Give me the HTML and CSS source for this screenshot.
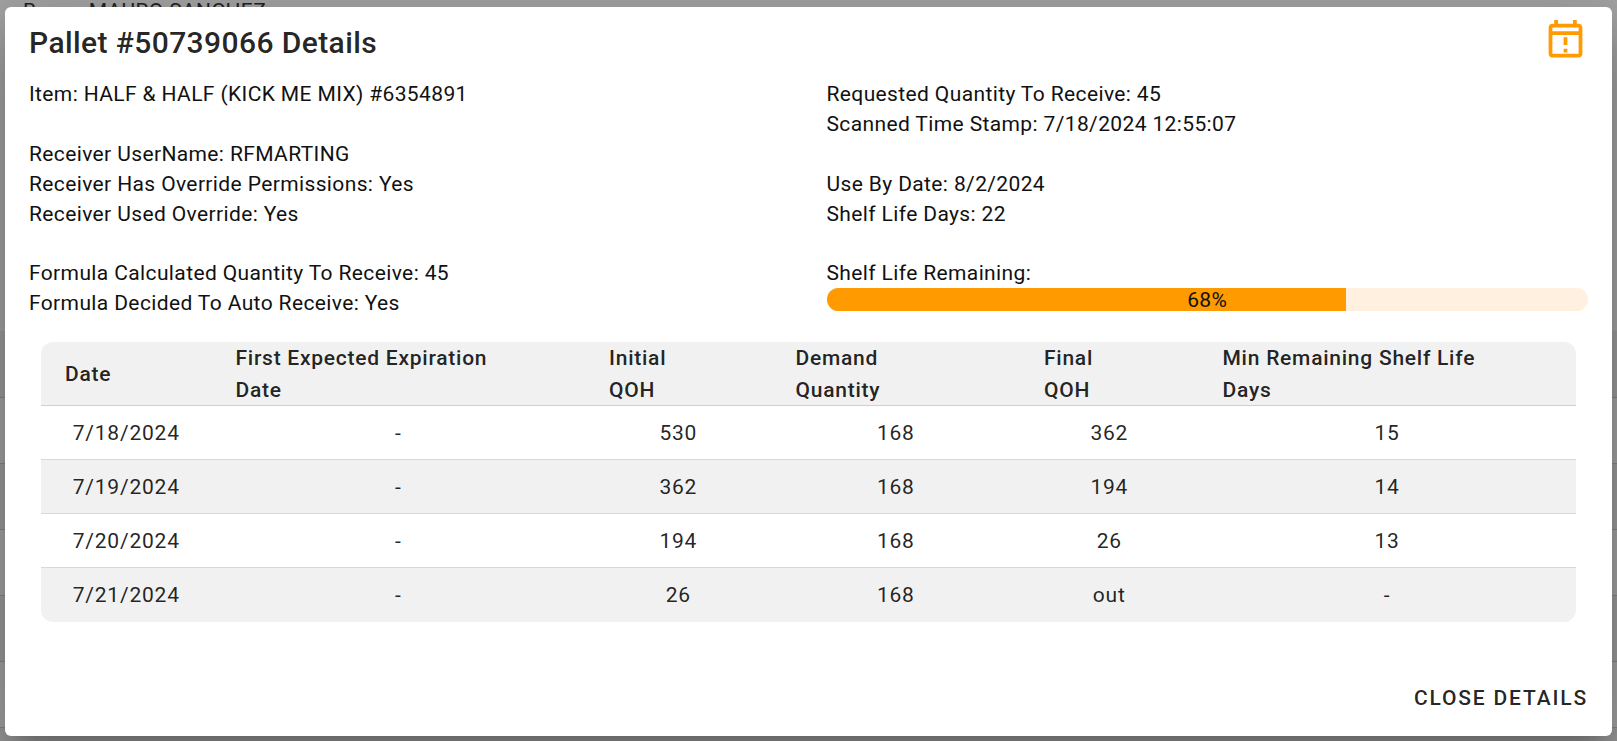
FILE: index.html
```html
<!DOCTYPE html>
<html lang="en">
<head>
<meta charset="utf-8">
<title>Pallet Details</title>
<link rel="stylesheet" href="styles.css">
</head>
<body>
<div class="page">
  <p class="page-line"><span>Buyer:</span> <span>MAURO SANCHEZ</span></p>
  <div class="page-rows"><i></i><i></i><i></i><i></i><i></i><i></i><i></i></div>
</div>
<main class="dialog">
  <header class="head">
    <h1 class="title">Pallet #50739066 Details</h1>
    <svg class="alert" viewBox="0 0 24 24"><path d="M19 3H18V1H16V3H8V1H6V3H5C3.89 3 3 3.9 3 5V19C3 20.11 3.9 21 5 21H19C20.11 21 21 20.11 21 19V5C21 3.9 20.11 3 19 3M19 19H5V9H19V19M19 7H5V5H19V7M11 10.2H13V14.4H11ZM11 16.4H13V18.4H11Z"/></svg>
  </header>
  <section class="info">
    <div class="col">
      <p class="group">Item: HALF &amp; HALF (KICK ME MIX) #6354891</p>
      <p>Receiver UserName: RFMARTING</p>
      <p>Receiver Has Override Permissions: Yes</p>
      <p>Receiver Used Override: Yes</p>
      <p class="last-group">Formula Calculated Quantity To Receive: 45</p>
      <p>Formula Decided To Auto Receive: Yes</p>
    </div>
    <div class="col">
      <p>Requested Quantity To Receive: 45</p>
      <p class="group">Scanned Time Stamp: 7/18/2024 12:55:07</p>
      <p>Use By Date: 8/2/2024</p>
      <p>Shelf Life Days: 22</p>
      <p class="last-group">Shelf Life Remaining:</p>
      <div class="bar"><div class="fill" style="width:68.18%"></div><span class="pct">68%</span></div>
    </div>
  </section>
  <table class="grid">
    <colgroup><col class="c1"><col class="c2"><col class="c3"><col class="c4"><col class="c5"><col class="c6"></colgroup>
    <thead><tr><th>Date</th><th>First Expected Expiration<br>Date</th><th>Initial<br>QOH</th><th>Demand<br>Quantity</th><th>Final<br>QOH</th><th>Min Remaining Shelf Life<br>Days</th></tr></thead>
    <tbody>
      <tr><td>7/18/2024</td><td>-</td><td>530</td><td>168</td><td>362</td><td>15</td></tr>
      <tr><td>7/19/2024</td><td>-</td><td>362</td><td>168</td><td>194</td><td>14</td></tr>
      <tr><td>7/20/2024</td><td>-</td><td>194</td><td>168</td><td>26</td><td>13</td></tr>
      <tr><td>7/21/2024</td><td>-</td><td>26</td><td>168</td><td>out</td><td>-</td></tr>
    </tbody>
  </table>
  <footer class="foot"><button class="close">CLOSE DETAILS</button></footer>
</main>
</body>
</html>
```
FILE: styles.css
```css
* { box-sizing: border-box; }
body { margin: 0; width: 1617px; height: 741px; overflow: hidden; background: #a3a3a3; font-family: Roboto, sans-serif; }
p, h1 { margin: 0; }
.page { position: absolute; inset: 0; overflow: hidden; }
.page-line { padding-left: 23px; font-size: 21px; line-height: 24px; margin-top: -1px; letter-spacing: .375px; color: #222; white-space: nowrap; }
.page-rows { margin-top: 308px; }
.page-rows i { display: block; height: 66px; border-top: 1px solid #868686; }
.page-rows i:first-child { border-top: 0; }
.page-rows i:nth-child(odd) { background: #9b9b9b; }
.dialog { position: relative; display: flex; flex-direction: column; width: 1607px; height: 729px; margin: 7px 5px; background: #fff; border-radius: 6px; padding: 0 24px; box-shadow: 0 16px 22px -10px rgba(0,0,0,.2), 0 36px 57px 4px rgba(0,0,0,.14), 0 14px 69px 12px rgba(0,0,0,.12); }
.head { display: flex; justify-content: space-between; height: 72px; padding-top: 11px; }
.title { padding-top: 1px; font-size: 30px; line-height: 48px; font-weight: 500; letter-spacing: .4px; color: rgba(0,0,0,.87); }
.alert { width: 45px; height: 45px; fill: #ff9a00; }
.info { display: grid; grid-template-columns: 797.5px 1fr; height: 263px; font-size: 21px; line-height: 30px; letter-spacing: .375px; color: #111; }
.group { margin-bottom: 30px; }
.last-group { margin-top: 29px; }
.bar { position: relative; height: 23px; border-radius: 12px; background: #fff0df; overflow: hidden; }
.fill { height: 23px; background: #ff9a00; }
.pct { position: absolute; inset: 0; text-align: center; line-height: 24px; }
.grid { table-layout: fixed; width: 1534.5px; margin-left: 12px; border-collapse: separate; border-spacing: 0; border-radius: 12px; overflow: hidden; font-size: 21px; color: rgba(0,0,0,.87); }
.c1 { width: 170.5px; }
.c2 { width: 373.5px; }
.c3 { width: 186.5px; }
.c4 { width: 248.5px; }
.c5 { width: 178.5px; }
.c6 { width: 377px; }
th { height: 64px; padding: 0 24px; text-align: left; font-weight: 500; line-height: 32px; letter-spacing: .75px; background: #f1f1f1; box-shadow: inset 0 -1px #d0d0d0; white-space: nowrap; }
td { height: 54px; padding: 0; text-align: center; line-height: 24px; letter-spacing: .78px; box-shadow: inset 0 -1px #d8d8d8; }
tbody tr:nth-child(even) { background: #f1f1f1; }
tbody tr:last-child td { box-shadow: none; }
.foot { display: flex; justify-content: flex-end; margin-top: auto; padding-bottom: 19px; }
.close { border: 0; padding: 0; background: none; font: 500 21px/38px Roboto, sans-serif; letter-spacing: 1.84px; color: rgba(0,0,0,.87); }
```
